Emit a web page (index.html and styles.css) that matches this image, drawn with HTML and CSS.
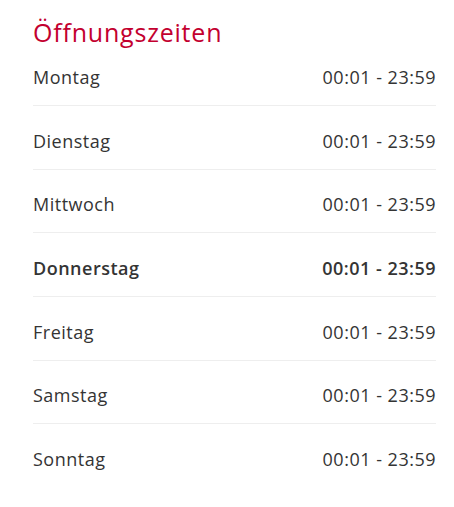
FILE: index.html
```html
<!DOCTYPE html>
<html lang="de">
<head>
<meta charset="utf-8">
<title>Öffnungszeiten</title>
<link rel="stylesheet" href="styles.css">
</head>
<body>
<section class="hours">
  <h2 class="hours-title">Öffnungszeiten</h2>
  <ul class="hours-list">
    <li class="hours-row"><span class="day">Montag</span><span class="time">00:01 - 23:59</span></li>
    <li class="hours-row"><span class="day">Dienstag</span><span class="time">00:01 - 23:59</span></li>
    <li class="hours-row"><span class="day">Mittwoch</span><span class="time">00:01 - 23:59</span></li>
    <li class="hours-row is-today"><span class="day">Donnerstag</span><span class="time">00:01 - 23:59</span></li>
    <li class="hours-row"><span class="day">Freitag</span><span class="time">00:01 - 23:59</span></li>
    <li class="hours-row"><span class="day">Samstag</span><span class="time">00:01 - 23:59</span></li>
    <li class="hours-row"><span class="day">Sonntag</span><span class="time">00:01 - 23:59</span></li>
  </ul>
</section>
</body>
</html>
```
FILE: styles.css
```css
* { box-sizing: border-box; }
html, body { background: #fff; }
body {
  margin: 0;
  font-family: "Open Sans", "DejaVu Sans", sans-serif;
  color: #343434;
}
.hours {
  padding: 15px 18px 0 33px;
}
.hours-title {
  margin: 0;
  font-size: 25px;
  line-height: 34px;
  font-weight: 400;
  letter-spacing: 0.8px;
  color: #c3002f;
}
.hours-list {
  list-style: none;
  margin: 0;
  padding: 0;
}
.hours-row {
  display: flex;
  justify-content: space-between;
  align-items: center;
  font-size: 18px;
  line-height: 24px;
  letter-spacing: 0.5px;
  padding: 22.7px 0 16px;
  border-bottom: 1px solid #eeeeee;
}
.hours-row:first-child {
  padding-top: 16px;
}
.hours-row:last-child {
  border-bottom: none;
}
.is-today {
  font-weight: 600;
}
```
